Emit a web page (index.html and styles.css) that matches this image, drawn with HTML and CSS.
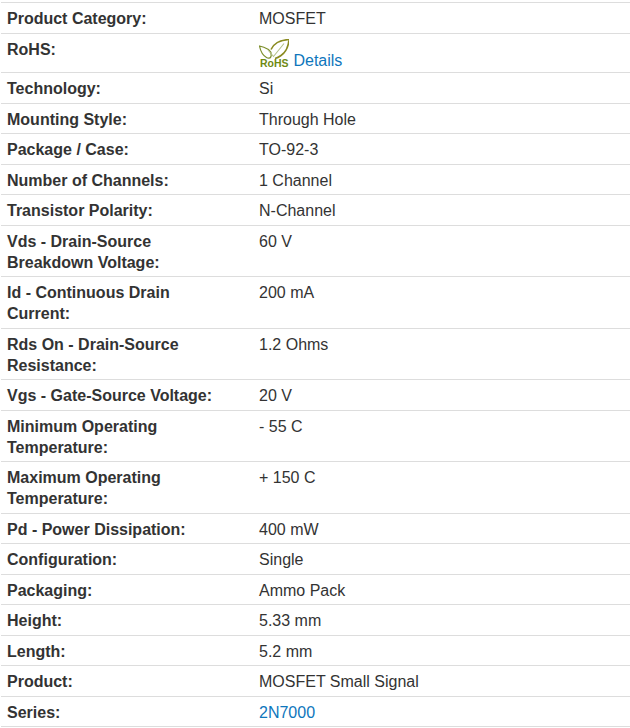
FILE: index.html
```html
<!DOCTYPE html>
<html lang="en">
<head>
<meta charset="utf-8">
<title>Product attributes</title>
<link rel="stylesheet" href="styles.css">
</head>
<body>
<table class="specs">
<tbody>
<tr><th>Product Category:</th><td>MOSFET</td></tr>
<tr class="rohs"><th>RoHS:</th><td><svg class="rohs-icon" viewBox="0 0 30 29.8" width="30" height="29.8" aria-hidden="true"><path d="M0.5 7C4 7.5 7 9 9.5 10.5C11.5 12 12.5 15 12 17.5C11.5 19.5 9 19.5 7.5 18.5C4 16.5 1.5 12 0.5 7Z" fill="none" stroke="#7d8f2c" stroke-width="1.2"/><path d="M30 0.5C23 1 15 3.5 12 10.5M30 0.5C29.5 7 27 13 22 16.5C20 18 18 19 16 19.5" fill="none" stroke="#8a8a20" stroke-width="1.6"/><path d="M9 11L14.5 17.5L25 4.5" fill="none" stroke="#b3c08a" stroke-width="1.1"/><text x="1" y="28.5" class="rohs-text">RoHS</text></svg> <a href="#">Details</a></td></tr>
<tr><th>Technology:</th><td>Si</td></tr>
<tr><th>Mounting Style:</th><td>Through Hole</td></tr>
<tr><th>Package / Case:</th><td>TO-92-3</td></tr>
<tr><th>Number of Channels:</th><td>1 Channel</td></tr>
<tr><th>Transistor Polarity:</th><td>N-Channel</td></tr>
<tr><th>Vds - Drain-Source Breakdown Voltage:</th><td>60 V</td></tr>
<tr><th>Id - Continuous Drain Current:</th><td>200 mA</td></tr>
<tr><th>Rds On - Drain-Source Resistance:</th><td>1.2 Ohms</td></tr>
<tr><th>Vgs - Gate-Source Voltage:</th><td>20 V</td></tr>
<tr><th>Minimum Operating Temperature:</th><td>- 55 C</td></tr>
<tr><th>Maximum Operating Temperature:</th><td>+ 150 C</td></tr>
<tr><th>Pd - Power Dissipation:</th><td>400 mW</td></tr>
<tr><th>Configuration:</th><td>Single</td></tr>
<tr><th>Packaging:</th><td>Ammo Pack</td></tr>
<tr><th>Height:</th><td>5.33 mm</td></tr>
<tr><th>Length:</th><td>5.2 mm</td></tr>
<tr><th>Product:</th><td>MOSFET Small Signal</td></tr>
<tr><th>Series:</th><td><a href="#">2N7000</a></td></tr>
</tbody>
</table>
</body>
</html>
```
FILE: styles.css
```css
html, body { margin: 0; padding: 0; background: #fff; }
body { padding: 2.4px 0 0 1px; font-family: "Liberation Sans", Arial, sans-serif; font-size: 16px; line-height: 21px; color: #333; }
.specs { width: 629px; border-collapse: collapse; table-layout: fixed; border-bottom: 1px solid #ddd; }
.specs th, .specs td { border-top: 1px solid #ddd; padding: 5px 6px 3.5px; vertical-align: top; text-align: left; }
.specs th { width: 215px; padding-right: 25px; font-weight: bold; }
.specs td { padding-left: 12px; }
.specs a { color: #0e76bc; text-decoration: none; }
.rohs td { line-height: 16px; }
.rohs-icon { vertical-align: -3px; }
.rohs-text { font: bold 10.5px "Liberation Sans", Arial, sans-serif; fill: #6f8a12; }
```
